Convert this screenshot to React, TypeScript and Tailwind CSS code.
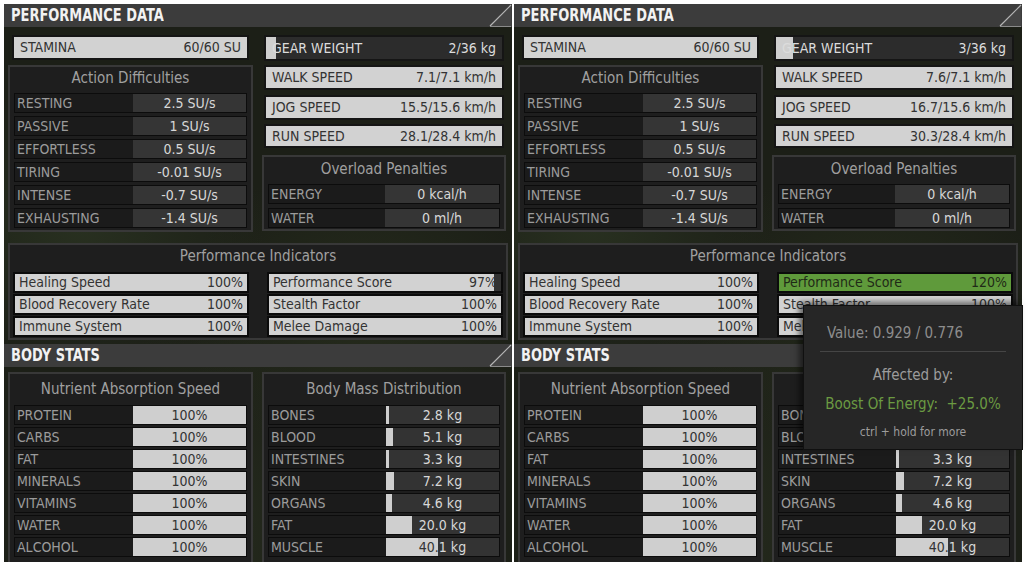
import React from 'react';

type PanelData = {
  gear: { value: string; fill: number };
  walk: string;
  jog: string;
  run: string;
  perfScore: string;
  perfGreen: boolean;
  tooltip: boolean;
};

const panels: PanelData[] = [
  { gear: { value: '2/36 kg', fill: 10 }, walk: '7.1/7.1 km/h', jog: '15.5/15.6 km/h', run: '28.1/28.4 km/h', perfScore: '97%', perfGreen: false, tooltip: false },
  { gear: { value: '3/36 kg', fill: 17 }, walk: '7.6/7.1 km/h', jog: '16.7/15.6 km/h', run: '30.3/28.4 km/h', perfScore: '120%', perfGreen: true, tooltip: true },
];

const difficulties = [
  ['RESTING', '2.5 SU/s'],
  ['PASSIVE', '1 SU/s'],
  ['EFFORTLESS', '0.5 SU/s'],
  ['TIRING', '-0.01 SU/s'],
  ['INTENSE', '-0.7 SU/s'],
  ['EXHAUSTING', '-1.4 SU/s'],
];

const nutrients = ['PROTEIN', 'CARBS', 'FAT', 'MINERALS', 'VITAMINS', 'WATER', 'ALCOHOL'];

const bodyMass: [string, string, number][] = [
  ['BONES', '2.8 kg', 3],
  ['BLOOD', '5.1 kg', 7],
  ['INTESTINES', '3.3 kg', 3],
  ['SKIN', '7.2 kg', 8],
  ['ORGANS', '4.6 kg', 6],
  ['FAT', '20.0 kg', 26],
  ['MUSCLE', '40.1 kg', 52],
];

function HeaderBar({ title }: { title: string }) {
  return (
    <div className="relative flex h-[23px] shrink-0 items-center bg-[#3c3c3c] pl-[7px]">
      <span className="inline-block origin-left scale-x-[0.85] text-[17px] font-bold leading-none text-[#f2f2f2]">{title}</span>
      <svg className="absolute right-0 top-0" width="23" height="23" viewBox="0 0 23 23">
        <polygon points="1,22 22,1 22,22" fill="#454545" />
        <line x1="1" y1="22" x2="22" y2="1" stroke="#b5b5b5" strokeWidth="1.2" />
        <line x1="1" y1="22.5" x2="22" y2="22.5" stroke="#8a8a8a" strokeWidth="1" />
      </svg>
    </div>
  );
}

// titled dark box; titleClass gives the title strip its height
function Box({ title, titleClass, className, children }: { title: string; titleClass: string; className?: string; children: React.ReactNode }) {
  return (
    <div className={`flex flex-col border-2 border-[#383838] bg-[#1e1e1e] px-[4px] ${className ?? ''}`}>
      <div className={`flex shrink-0 items-center justify-center text-[15px] leading-none text-[#a0a0a0] ${titleClass}`}>{title}</div>
      {children}
    </div>
  );
}

function TopBar({ label, value, fill, dark }: { label: string; value: string; fill?: number; dark?: boolean }) {
  return (
    <div className={`relative flex h-full items-center justify-between border-2 border-[#151515] px-[6px] text-[14px] ${dark ? 'bg-[#2c2c2c] text-[#dcdcdc]' : 'bg-[#d2d2d2] text-[#333]'}`}>
      {fill !== undefined && <div className="absolute inset-y-0 left-0 bg-[#cfcfcf]" style={{ width: fill }} />}
      <span className="relative">{label}</span>
      <span className="relative">{value}</span>
    </div>
  );
}

function DarkRow({ label, children }: { label: string; children: React.ReactNode }) {
  return (
    <div className="flex h-[20px] shrink-0 border border-[#0c0c0c] bg-[#1b1b1b] text-[14px]">
      <div className="flex flex-1 items-center pl-[2px] text-[#9b9b9b]">{label}</div>
      {children}
    </div>
  );
}

function IndRow({ label, value, pct = 100, green }: { label: string; value: string; pct?: number; green?: boolean }) {
  return (
    <div className="relative flex h-[21px] items-center justify-between border-2 border-[#0b0b0b] bg-[#333] px-[4px] text-[14px] text-[#333]">
      <div className={`absolute inset-y-0 left-0 ${green ? 'bg-[#5f9a3b]' : 'bg-[#d2d2d2]'}`} style={{ width: `${pct}%` }} />
      <span className={`relative ${green ? 'text-[#1f2a17]' : ''}`}>{label}</span>
      <span className={`relative ${green ? 'text-[#1f2a17]' : ''}`}>{value}</span>
    </div>
  );
}

function Tooltip() {
  return (
    <div className="absolute left-[289px] top-[301px] z-10 flex h-[145px] w-[220px] flex-col border border-[#101010] bg-[#262626] shadow-[-4px_-3px_6px_rgba(0,0,0,0.5)]">
      <div className="pl-[23px] pt-[16px] text-[15px] leading-[22px] text-[#8d8d8d]">Value: 0.929 / 0.776</div>
      <div className="mx-[16px] mt-[7px] h-px bg-[#454545]" />
      <div className="mt-[13px] text-center text-[15px] leading-[20px] text-[#9c9c9c]">Affected by:</div>
      <div className="mt-[9px] text-center text-[15px] leading-[20px] text-[#6b9a42]">Boost Of Energy:&nbsp; +25.0%</div>
      <div className="mt-[9px] text-center text-[12px] leading-[18px] text-[#9c9c9c]">ctrl + hold for more</div>
    </div>
  );
}

function Panel({ d }: { d: PanelData }) {
  return (
    <div className="relative flex h-[558px] w-[508px] flex-col bg-[#1c1f17] bg-[radial-gradient(ellipse_at_15%_40%,#283020_0,transparent_30%),radial-gradient(ellipse_at_70%_55%,#252b1c_0,transparent_35%),radial-gradient(ellipse_at_40%_95%,#262c1e_0,transparent_30%)]">
      <HeaderBar title="PERFORMANCE DATA" />
      <div className="flex h-[317px] shrink-0 flex-col px-[4px] pt-[8px]">
        <div className="flex gap-[9px]">
          <div className="flex w-[245px] flex-col">
            <div className="mx-[4px] h-[25px]">
              <TopBar label="STAMINA" value="60/60 SU" />
            </div>
            <Box title="Action Difficulties" titleClass="h-[26px] pb-[3px]" className="mt-[5px] h-[167px]">
              <div className="flex flex-col gap-[3px]">
                {difficulties.map(([l, v]) => (
                  <DarkRow key={l} label={l}>
                    <div className="flex w-[113px] items-center justify-center bg-[#353535] text-[#d8d8d8]">{v}</div>
                  </DarkRow>
                ))}
              </div>
            </Box>
          </div>
          <div className="flex w-[244px] flex-col">
            <div className="mx-[2px] h-[26px]">
              <TopBar label="GEAR WEIGHT" value={d.gear.value} fill={d.gear.fill} dark />
            </div>
            <div className="mx-[2px] mt-[4px] h-[25px]">
              <TopBar label="WALK SPEED" value={d.walk} />
            </div>
            <div className="mx-[2px] mt-[5px] h-[25px]">
              <TopBar label="JOG SPEED" value={d.jog} />
            </div>
            <div className="mx-[2px] mt-[4px] h-[24px]">
              <TopBar label="RUN SPEED" value={d.run} />
            </div>
            <Box title="Overload Penalties" titleClass="h-[27px] pb-[2px]" className="mt-[7px] h-[76px]">
              <div className="flex flex-col gap-[4px]">
                <DarkRow label="ENERGY">
                  <div className="flex w-[114px] items-center justify-center bg-[#353535] text-[#d8d8d8]">0 kcal/h</div>
                </DarkRow>
                <DarkRow label="WATER">
                  <div className="flex w-[114px] items-center justify-center bg-[#353535] text-[#d8d8d8]">0 ml/h</div>
                </DarkRow>
              </div>
            </Box>
          </div>
        </div>
        <div className="mt-[11px] flex h-[97px] w-[500px] flex-col border-2 border-[#383838] bg-[#1e1e1e] px-[3px]">
          <div className="flex h-[27px] shrink-0 items-center justify-center pb-[5px] text-[15px] leading-none text-[#a0a0a0]">Performance Indicators</div>
          <div className="grid grid-cols-2 gap-x-[18px] gap-y-px">
            <IndRow label="Healing Speed" value="100%" />
            <IndRow label="Performance Score" value={d.perfScore} pct={d.perfGreen ? 100 : 97} green={d.perfGreen} />
            <IndRow label="Blood Recovery Rate" value="100%" />
            <IndRow label="Stealth Factor" value="100%" />
            <IndRow label="Immune System" value="100%" />
            <IndRow label="Melee Damage" value="100%" />
          </div>
        </div>
      </div>
      <HeaderBar title="BODY STATS" />
      <div className="flex flex-1 gap-[9px] overflow-hidden px-[4px] pt-[5px]">
        <Box title="Nutrient Absorption Speed" titleClass="h-[31px]" className="h-[200px] w-[245px] shrink-0">
          <div className="flex flex-col gap-[2px]">
            {nutrients.map((n) => (
              <DarkRow key={n} label={n}>
                <div className="flex w-[113px] items-center justify-center bg-[#cfcfcf] text-[#333]">100%</div>
              </DarkRow>
            ))}
          </div>
        </Box>
        <Box title="Body Mass Distribution" titleClass="h-[31px]" className="h-[200px] w-[244px] shrink-0">
          <div className="flex flex-col gap-[2px]">
            {bodyMass.map(([l, v, f]) => (
              <DarkRow key={l} label={l}>
                <div className="relative w-[113px] bg-[#333]">
                  <div className="flex h-full items-center justify-center text-[#d8d8d8]">{v}</div>
                  <div className="absolute inset-y-0 left-0 overflow-hidden bg-[#cfcfcf]" style={{ width: f }}>
                    <div className="flex h-full w-[113px] items-center justify-center text-[#333]">{v}</div>
                  </div>
                </div>
              </DarkRow>
            ))}
          </div>
        </Box>
      </div>
      {d.tooltip && <Tooltip />}
    </div>
  );
}

export default function App() {
  return (
    <div className="flex h-[566px] w-[1029px] gap-[2px] bg-white pl-[4px] pt-[4px] font-['Liberation_Sans_Narrow','DejaVu_Sans_Condensed','Arial_Narrow',sans-serif]">
      {panels.map((p, i) => (
        <Panel key={i} d={p} />
      ))}
    </div>
  );
}
